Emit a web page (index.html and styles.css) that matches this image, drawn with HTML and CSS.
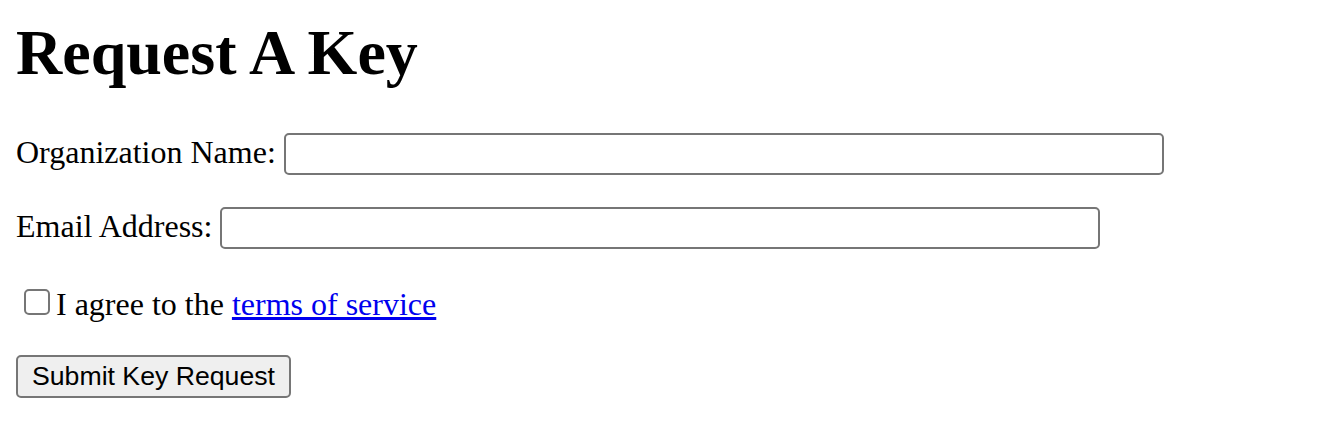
FILE: index.html
```html
<!DOCTYPE html>
<html>
<head>
<meta charset="utf-8">
<title>Request A Key</title>
<link rel="stylesheet" href="styles.css">
</head>
<body>
<h1 class="title">Request A Key</h1>
<form class="form">
  <div class="row">
    <label class="label" for="org">Organization Name:</label>
    <input class="field" id="org" type="text">
  </div>
  <div class="row">
    <label class="label" for="email">Email Address:</label>
    <input class="field" id="email" type="email">
  </div>
  <div class="row">
    <input class="check" id="tos" type="checkbox"><label for="tos">I agree to the </label><a class="link" href="#">terms of service</a>
  </div>
  <div class="row">
    <button class="submit" type="button">Submit Key Request</button>
  </div>
</form>
</body>
</html>
```
FILE: styles.css
```css
html, body {
  background: #ffffff;
}
body {
  margin: 16px;
  font-family: "Liberation Serif", "Times New Roman", serif;
  font-size: 32px;
  color: #000000;
}
.title {
  font-size: 64px;
  font-weight: bold;
  margin: 0 0 42.88px 0;
}
.form {
  margin: 0;
}
.row {
  margin: 32px 0;
}
.field {
  box-sizing: border-box;
  width: 880px;
  height: 42px;
  font-family: "Liberation Sans", Arial, sans-serif;
  font-size: 26.67px;
  padding: 2px 4px;
  border: 2px solid #767676;
  border-radius: 5px;
  background: #ffffff;
  vertical-align: baseline;
  margin: 0;
}
.check {
  appearance: none;
  -webkit-appearance: none;
  box-sizing: border-box;
  width: 26px;
  height: 26px;
  margin: 8px 6px 4px 8px;
  border: 2px solid #767676;
  border-radius: 5px;
  background: #ffffff;
  vertical-align: -4px;
}
.link {
  color: #0000ee;
  text-decoration: underline;
}
.submit {
  box-sizing: border-box;
  font-family: "Liberation Sans", Arial, sans-serif;
  font-size: 26.67px;
  padding: 2px 14px;
  height: 43px;
  border: 2px solid #767676;
  border-radius: 5px;
  background: #efefef;
  color: #000000;
  margin: 0;
}
```
